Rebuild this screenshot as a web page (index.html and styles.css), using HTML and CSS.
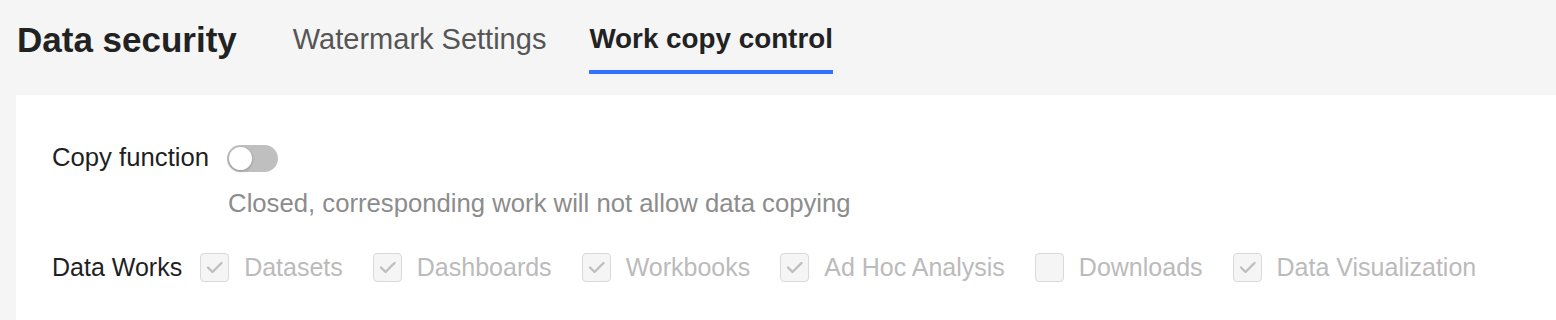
FILE: index.html
```html
<!DOCTYPE html>
<html lang="en">

<head>
    <meta http-equiv="Content-Type" content="text/html; charset=utf-8" />
    <title>Data security</title>
    <link rel="stylesheet" href="styles.css">
</head>

<body>
    <header class="page-header">
        <h1 class="page-title">Data security</h1>
        <nav class="tabs">
            <a class="tab">Watermark Settings</a>
            <a class="tab active">Work copy control</a>
        </nav>
    </header>
    <section class="panel">
        <div class="form-item">
            <label class="form-label">Copy function</label>
            <div class="form-control">
                <span class="switch"><span class="switch-knob"></span></span>
                <p class="form-help">Closed, corresponding work will not allow data copying</p>
            </div>
        </div>
        <div class="form-item">
            <label class="form-label">Data Works</label>
            <div class="form-control checks">
                <span class="check checked">Datasets</span>
                <span class="check checked">Dashboards</span>
                <span class="check checked">Workbooks</span>
                <span class="check checked">Ad Hoc Analysis</span>
                <span class="check">Downloads</span>
                <span class="check checked">Data Visualization</span>
            </div>
        </div>
    </section>
</body>

</html>
```

FILE: styles.css
```css
html {
    background-color: #f5f5f5;
}

body {
    margin: 0;
    font-family: "Liberation Sans", Arial, sans-serif;
    color: #1f1f1f;
}

.page-header {
    display: flex;
    align-items: flex-start;
    padding: 20px 0 21px 17px;
}

.page-title {
    margin: 0 56px 0 0;
    font-size: 35px;
    line-height: 40px;
    font-weight: bold;
    color: #222;
}

.tabs {
    display: flex;
    gap: 43px;
}

.tab {
    display: block;
    padding: 1px 0 13px;
    font-size: 29px;
    line-height: 36px;
    color: #555;
    border-bottom: 4px solid transparent;
}

.tab.active {
    font-size: 27.8px;
    color: #222;
    font-weight: bold;
    border-bottom-color: #3370ff;
}

.panel {
    box-sizing: border-box;
    min-height: 225px;
    margin-left: 16px;
    padding: 44px 36px 0;
    background-color: #fff;
}

.form-item {
    display: flex;
    align-items: flex-start;
    margin-bottom: 28px;
}

.form-label {
    margin-right: 18px;
    font-size: 25.7px;
    line-height: 36px;
    color: #1f1f1f;
}

.form-item + .form-item .form-label {
    font-size: 25px;
}

.form-control {
    display: flex;
    flex-direction: column;
    align-items: flex-start;
}

.switch {
    position: relative;
    display: block;
    width: 51px;
    height: 27px;
    margin-top: 6px;
    border-radius: 14px;
    background-color: #bfbfbf;
}

.switch-knob {
    position: absolute;
    top: 2px;
    left: 2px;
    width: 23px;
    height: 23px;
    border-radius: 50%;
    background-color: #fff;
    box-shadow: 0 1px 3px rgba(0, 0, 0, 0.25);
}

.form-help {
    margin: 13px 0 0 1px;
    font-size: 25.7px;
    line-height: 36px;
    color: #8c8c8c;
}

.checks {
    flex-direction: row;
    align-items: center;
    gap: 30px;
    min-height: 36px;
}

.check {
    display: flex;
    align-items: center;
    font-size: 25px;
    line-height: 36px;
    color: #bbb;
}

.check::before {
    content: "";
    flex: none;
    width: 27px;
    height: 27px;
    margin-right: 15px;
    border: 1px solid #d9d9d9;
    border-radius: 4px;
    background-color: #f5f5f5;
}

.check.checked::before {
    background: #f5f5f5 url("data:image/svg+xml,%3Csvg xmlns='http://www.w3.org/2000/svg' width='27' height='27' viewBox='0 0 27 27'%3E%3Cpath d='M7 13.5l4.5 4.5l9 -9' fill='none' stroke='%23bfbfbf' stroke-width='2.4' stroke-linecap='round' stroke-linejoin='round'/%3E%3C/svg%3E") no-repeat center;
}
```
